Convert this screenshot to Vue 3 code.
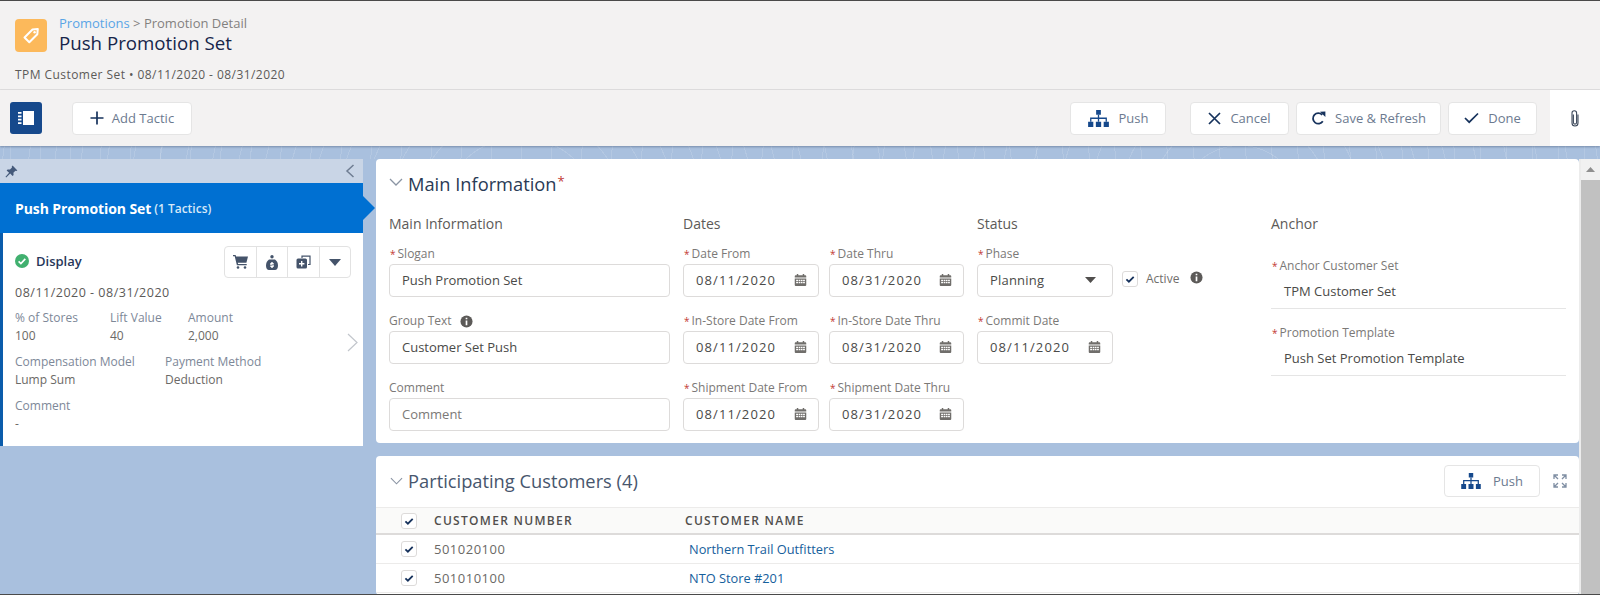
<script setup>
const mainFields = [
  { label: 'Slogan', req: true, value: 'Push Promotion Set' },
  { label: 'Group Text', info: true, value: 'Customer Set Push' },
  { label: 'Comment', value: 'Comment', placeholder: true }
]
const dateFields = [
  { label: 'Date From', value: '08/11/2020' },
  { label: 'Date Thru', value: '08/31/2020' },
  { label: 'In-Store Date From', value: '08/11/2020' },
  { label: 'In-Store Date Thru', value: '08/31/2020' },
  { label: 'Shipment Date From', value: '08/11/2020' },
  { label: 'Shipment Date Thru', value: '08/31/2020' }
]
const customers = [
  { num: '501020100', name: 'Northern Trail Outfitters' },
  { num: '501010100', name: 'NTO Store #201' }
]
const stats = [
  [{ l: '% of Stores', v: '100', w: 95 }, { l: 'Lift Value', v: '40', w: 78 }, { l: 'Amount', v: '2,000', w: 90 }],
  [{ l: 'Compensation Model', v: 'Lump Sum', w: 150 }, { l: 'Payment Method', v: 'Deduction', w: 120 }],
  [{ l: 'Comment', v: '-', w: 120 }]
]
</script>

<template>
  <div class="page">
    <svg class="defs" width="0" height="0" aria-hidden="true">
      <defs>
        <symbol id="cal" viewBox="0 0 14 14">
          <path fill="currentColor" d="M3 0.5h1.6v1.5h4.8V0.5H11v1.5h1.2c.6 0 1 .4 1 1v1.2H.8V3c0-.6.4-1 1-1H3zM.8 5.3h12.4V12.5c0 .6-.4 1-1 1H1.8c-.6 0-1-.4-1-1z"/>
          <path fill="#fff" d="M2.3 6.6h2v1.5h-2zM5 6.6h1.8v1.5H5zM7.4 6.6h1.8v1.5H7.4zM9.8 6.6h1.9v1.5H9.8zM2.3 9h2v1.6h-2zM5 9h1.8v1.6H5zM7.4 9h1.8v1.6H7.4zM9.8 9h1.9v1.6H9.8z"/>
        </symbol>
        <symbol id="info" viewBox="0 0 14 14">
          <circle cx="7" cy="7" r="6.5" fill="currentColor"/>
          <path fill="#fff" d="M6.1 3h1.8v1.7H6.1zM6.1 5.8h1.8V11H6.1z"/>
        </symbol>
        <symbol id="tree" viewBox="0 0 22 18">
          <path fill="currentColor" d="M8.5 0h5v5h-5zM0 12.5h5.5V18H0zM8.2 12.5h5.6V18H8.2zM16.5 12.5H22V18h-5.5z"/>
          <path fill="none" stroke="currentColor" stroke-width="1.4" d="M11 5v7.5M2.8 12.5V8.7h16.4v3.8"/>
        </symbol>
        <symbol id="tick" viewBox="0 0 16 16">
          <path fill="none" stroke="#16325c" stroke-width="1.8" d="M4.4 8.4l2.5 2.3 4.8-4.8"/>
        </symbol>
      </defs>
    </svg>

    <header class="head">
      <div class="tag-icon">
        <svg width="22" height="22" viewBox="0 0 22 22">
          <path fill="none" stroke="#fff" stroke-width="2" stroke-linejoin="round" d="M12.5 4.5l5.3-.6-.5 5.4-8 8-4.8-4.8z"/>
          <circle cx="14.6" cy="7.2" r="1.2" fill="#fff"/>
        </svg>
      </div>
      <div class="head-text">
        <div class="crumb"><span class="crumb-link">Promotions</span> &gt; Promotion Detail</div>
        <h1 class="title">Push Promotion Set</h1>
      </div>
      <div class="head-sub">TPM Customer Set • 08/11/2020 - 08/31/2020</div>
    </header>

    <div class="toolbar">
      <button class="toggle">
        <svg width="16" height="14" viewBox="0 0 16 14">
          <path fill="#fff" d="M5 0h11v14H5zM0 1h3.5v1.8H0zM0 4.4h3.5v1.8H0zM0 7.8h3.5v1.8H0zM0 11.2h3.5V13H0z"/>
        </svg>
      </button>
      <button class="btn add">
        <svg width="14" height="14" viewBox="0 0 14 14"><path fill="none" stroke="#16325c" stroke-width="1.7" d="M7 .5v13M.5 7h13"/></svg>
        <span>Add Tactic</span>
      </button>
      <div class="spacer"></div>
      <button class="btn push">
        <svg class="tree" width="21" height="17"><use href="#tree"/></svg>
        <span>Push</span>
      </button>
      <button class="btn cancel">
        <svg width="13" height="13" viewBox="0 0 13 13"><path fill="none" stroke="#16325c" stroke-width="1.7" d="M1 1l11 11M12 1L1 12"/></svg>
        <span>Cancel</span>
      </button>
      <button class="btn save">
        <svg width="15" height="15" viewBox="0 0 15 15"><path fill="none" stroke="#16325c" stroke-width="1.8" d="M11.8 10.2a5.3 5.3 0 1 1-.6-6.4"/><path fill="#16325c" d="M9 .8l5.4-.3v5.4z"/></svg>
        <span>Save &amp; Refresh</span>
      </button>
      <button class="btn done">
        <svg width="15" height="12" viewBox="0 0 15 12"><path fill="none" stroke="#16325c" stroke-width="1.7" d="M1 6l4.2 4.2L14 1.5"/></svg>
        <span>Done</span>
      </button>
      <div class="attach">
        <svg width="8" height="17" viewBox="0 0 8 17"><path fill="none" stroke="#3e4a5c" stroke-width="1.1" d="M2.4 4.5v8a1.6 1.6 0 0 0 3.2 0V3a2.3 2.3 0 0 0-4.6 0v10a3 3 0 0 0 6 0V4.5"/></svg>
      </div>
    </div>

    <div class="body">
      <aside class="side">
        <div class="pinbar">
          <svg width="13" height="13" viewBox="0 0 13 13"><path fill="#44597a" d="M7.6.6l4.8 4.8-1.2.6-.8-.3-2 2 .2 2.3-1 1-2.4-2.4L1.2 12.5l-.7-.7 3.6-4-2.5-2.4 1-1 2.4.2 2-2-.3-.8z"/></svg>
          <svg width="10" height="14" viewBox="0 0 10 14"><path fill="none" stroke="#6f7d92" stroke-width="1.5" d="M8.5 1L2 7l6.5 6"/></svg>
        </div>
        <div class="set-head">
          <span class="set-name">Push Promotion Set</span>
          <span class="set-count">(1 Tactics)</span>
        </div>
        <div class="card">
          <div class="card-top">
            <svg class="ok-icon" width="14" height="14" viewBox="0 0 14 14"><circle cx="7" cy="7" r="7" fill="#41b06f"/><path fill="none" stroke="#fff" stroke-width="1.7" d="M3.6 7.3l2.3 2.2 4.4-4.6"/></svg>
            <span class="tactic">Display</span>
            <div class="btn-group">
              <span class="cell">
                <svg width="15" height="14" viewBox="0 0 15 14"><path fill="#44536a" d="M0 0h2.6l.5 1.6H15l-1.6 6.2H4.8l.3 1.2h8.6v1.3H3.9L1.7 1.3H0z"/><circle cx="5" cy="12.5" r="1.3" fill="#44536a"/><circle cx="12" cy="12.5" r="1.3" fill="#44536a"/></svg>
              </span>
              <span class="cell">
                <svg width="12" height="15" viewBox="0 0 12 15"><circle cx="6" cy="1.7" r="1.7" fill="#44536a"/><path fill="#44536a" d="M3 4.4h6c2 1.4 3 3.4 3 6.3 0 2.8-1.4 4.3-3 4.3H3c-1.6 0-3-1.5-3-4.3 0-2.9 1-4.9 3-6.3z"/><path fill="#fff" d="M5.3 7h1.4v1h1v1H5.6v.6h2.1v2.5h-1v.9H5.3v-.9h-1v-1h2.3v-.6H4.3V8h1z"/></svg>
              </span>
              <span class="cell">
                <svg width="15" height="14" viewBox="0 0 15 14"><path fill="none" stroke="#44536a" stroke-width="1.2" d="M6 3V1.2h8v8.3h-2"/><rect x="0.5" y="3.5" width="10.5" height="10" rx="1.5" fill="#44536a"/><path fill="#fff" d="M5 6h1.4v2h2v1.4h-2v2H5v-2H3V8h2z"/></svg>
              </span>
              <span class="cell">
                <svg width="12" height="7" viewBox="0 0 12 7"><path fill="#44536a" d="M0 0h12L6 7z"/></svg>
              </span>
            </div>
          </div>
          <div class="card-date">08/11/2020 - 08/31/2020</div>
          <div v-for="(row, i) in stats" :key="i" class="stat-row">
            <div v-for="s in row" :key="s.l" class="stat" :style="{ width: s.w + 'px' }">
              <div class="stat-l">{{ s.l }}</div>
              <div class="stat-v">{{ s.v }}</div>
            </div>
          </div>
          <svg class="card-next" width="11" height="19" viewBox="0 0 11 19"><path fill="none" stroke="#c2c6cc" stroke-width="1.2" d="M1 1l9 8.5L1 18"/></svg>
        </div>
      </aside>

      <main class="panels">
        <section class="panel info-panel">
          <div class="sec-head">
            <svg class="chev" width="14" height="8" viewBox="0 0 14 8"><path fill="none" stroke="#8a94a3" stroke-width="1.3" d="M1 1l6 6 6-6"/></svg>
            <h2 class="sec-title">Main Information<span class="req-big">*</span></h2>
          </div>
          <div class="form">
            <div class="group g-main">
              <h3 class="g-title">Main Information</h3>
              <div class="fields">
                <div v-for="f in mainFields" :key="f.label" class="field">
                  <label class="lab">
                    <span v-if="f.req" class="req">*</span>{{ f.label }}
                    <svg v-if="f.info" class="info" width="13" height="13"><use href="#info"/></svg>
                  </label>
                  <div class="input" :class="{ ph: f.placeholder }">{{ f.value }}</div>
                </div>
              </div>
            </div>

            <div class="group g-dates">
              <h3 class="g-title">Dates</h3>
              <div class="fields dates-grid">
                <div v-for="f in dateFields" :key="f.label" class="field">
                  <label class="lab"><span class="req">*</span>{{ f.label }}</label>
                  <div class="input date">
                    <span>{{ f.value }}</span>
                    <svg class="cal" width="13" height="14"><use href="#cal"/></svg>
                  </div>
                </div>
              </div>
            </div>

            <div class="group g-status">
              <h3 class="g-title">Status</h3>
              <div class="fields">
                <div class="field">
                  <label class="lab"><span class="req">*</span>Phase</label>
                  <div class="phase-row">
                    <div class="input date phase">
                      <span>Planning</span>
                      <svg width="11" height="6" viewBox="0 0 11 6"><path fill="#514f4d" d="M0 0h11L5.5 6z"/></svg>
                    </div>
                    <span class="check"><svg width="16" height="16"><use href="#tick"/></svg></span>
                    <span class="active">Active</span>
                    <svg class="info" width="13" height="13"><use href="#info"/></svg>
                  </div>
                </div>
                <div class="field status-date">
                  <label class="lab"><span class="req">*</span>Commit Date</label>
                  <div class="input date">
                    <span>08/11/2020</span>
                    <svg class="cal" width="13" height="14"><use href="#cal"/></svg>
                  </div>
                </div>
              </div>
            </div>

            <div class="group g-anchor">
              <h3 class="g-title">Anchor</h3>
              <div class="ro-list">
                <div class="ro">
                  <label class="lab"><span class="req">*</span>Anchor Customer Set</label>
                  <div class="ro-v">TPM Customer Set</div>
                </div>
                <div class="ro">
                  <label class="lab"><span class="req">*</span>Promotion Template</label>
                  <div class="ro-v">Push Set Promotion Template</div>
                </div>
              </div>
            </div>
          </div>
        </section>

        <section class="panel cust-panel">
          <div class="cust-head">
            <svg class="chev" width="13" height="8" viewBox="0 0 14 8"><path fill="none" stroke="#8a94a3" stroke-width="1.2" d="M1 1l6 6 6-6"/></svg>
            <h2 class="sec-title cust-title">Participating Customers (4)</h2>
            <div class="spacer"></div>
            <button class="btn push2">
              <svg class="tree" width="20" height="16"><use href="#tree"/></svg>
              <span>Push</span>
            </button>
            <svg class="expand" width="14" height="14" viewBox="0 0 14 14"><path fill="none" stroke="#7f8ea3" stroke-width="1.3" d="M1 5V1h4M1 1l4 4M9 1h4v4M13 1L9 5M1 9v4h4M1 13l4-4M13 9v4H9M13 13L9 9"/></svg>
          </div>
          <div class="row thead">
            <span class="check"><svg width="16" height="16"><use href="#tick"/></svg></span>
            <span>CUSTOMER NUMBER</span>
            <span>CUSTOMER NAME</span>
          </div>
          <div v-for="c in customers" :key="c.num" class="row tr">
            <span class="check"><svg width="16" height="16"><use href="#tick"/></svg></span>
            <span class="num">{{ c.num }}</span>
            <a class="link">{{ c.name }}</a>
          </div>
        </section>
      </main>

      <div class="scroll">
        <div class="scroll-up"><svg width="9" height="5" viewBox="0 0 9 5"><path fill="#8f8f8f" d="M4.5 0L9 5H0z"/></svg></div>
        <div class="scroll-thumb"></div>
      </div>
    </div>
  </div>
</template>

<style>
html, body { margin: 0; padding: 0; background: #a9c0de; }
</style>

<style scoped>
* { box-sizing: border-box; }
.defs { position: absolute; }
.page {
  width: 1600px;
  height: 595px;
  overflow: hidden;
  display: flex;
  flex-direction: column;
  font-family: "Open Sans", "Liberation Sans", sans-serif;
  font-size: 13px;
  color: #3e3e3c;
  background: #a9c0de;
  border-top: 1px solid #4a4a4a;
  border-bottom: 1px solid #4a4a4a;
}
.head {
  height: 89px;
  flex: none;
  background: #f3f2f2;
  border-bottom: 1px solid #e2e1e0;
  display: grid;
  grid-template-columns: 32px 1fr;
  column-gap: 12px;
  grid-template-rows: 40px auto;
  padding: 13px 15px 0;
  align-items: center;
}
.tag-icon {
  width: 32px;
  height: 33px;
  margin-top: 3px;
  background: #fcb95b;
  border-radius: 4px;
  display: flex;
  align-items: center;
  justify-content: center;
}
.crumb { font-size: 13px; line-height: 18px; color: #83817f; }
.crumb-link { color: #5aa5e6; }
.title {
  margin: 0;
  font-size: 18.7px;
  line-height: 22px;
  font-weight: 500;
  color: #16254a;
}
.head-sub {
  grid-column: 1 / 3;
  font-size: 12px;
  line-height: 16px;
  letter-spacing: .44px;
  color: #5c5a58;
  margin-top: 6px;
}
.toolbar {
  height: 56px;
  flex: none;
  background: #f3f2f2;
  display: flex;
  align-items: center;
  padding-left: 10px;
  box-shadow: 0 1px 2px rgba(60, 80, 110, .45);
  position: relative;
}
.toggle {
  width: 32px;
  height: 32px;
  border: none;
  padding: 0;
  background: #16498c;
  border-radius: 3px;
  display: flex;
  align-items: center;
  justify-content: center;
  margin-right: 30px;
}
.spacer { flex: 1; }
.btn {
  height: 33px;
  background: #fff;
  border: 1px solid #e5e5e5;
  border-radius: 4px;
  display: flex;
  align-items: center;
  justify-content: center;
  gap: 9px;
  font: inherit;
  font-size: 13px;
  color: #6c7a8f;
  padding: 0;
}
.add { width: 120px; gap: 8px; }
.push { width: 96px; margin-right: 24px; gap: 10px; }
.cancel { width: 99px; margin-right: 7px; }
.save { width: 145px; margin-right: 7px; }
.done { width: 89px; margin-right: 13px; }
.tree { color: #16498c; }
.attach {
  width: 50px;
  height: 56px;
  background: #fff;
  display: flex;
  align-items: center;
  justify-content: center;
}
.body {
  flex: 1;
  min-height: 0;
  display: flex;
  padding-top: 13px;
  align-items: flex-start;
  background-image: repeating-radial-gradient(circle at 520px 70px, rgba(255, 255, 255, .13) 0 1px, transparent 1px 26px),
    repeating-radial-gradient(circle at 1240px 60px, rgba(255, 255, 255, .13) 0 1px, transparent 1px 30px);
  background-size: 100% 13px;
  background-repeat: no-repeat;
}
.side { width: 363px; flex: none; }
.pinbar {
  height: 24px;
  background: #c9d5e6;
  display: flex;
  align-items: center;
  justify-content: space-between;
  padding: 0 8px 0 5px;
}
.set-head {
  height: 50px;
  background: #0070d2;
  color: #fff;
  display: flex;
  align-items: center;
  gap: 3px;
  padding-left: 15px;
  position: relative;
}
.set-head::after {
  content: "";
  position: absolute;
  left: 100%;
  top: 13px;
  border-left: 12px solid #0070d2;
  border-top: 12px solid transparent;
  border-bottom: 12px solid transparent;
}
.set-name { font-size: 14px; font-weight: 700; letter-spacing: -.1px; }
.set-count { font-size: 12px; font-weight: 600; color: #d7e8f8; }
.card {
  height: 213px;
  background: #fff;
  border-left: 3px solid #0b5cab;
  padding: 13px 12px 0 12px;
  position: relative;
}
.card-top { display: flex; align-items: center; height: 32px; }
.ok-icon { margin-top: -2px; }
.tactic { margin: -2px 0 0 7px; font-weight: 600; color: #27375a; }
.btn-group {
  margin-left: auto;
  display: flex;
  border: 1px solid #e2e2e2;
  border-radius: 4px;
  height: 32px;
  width: 127px;
}
.cell {
  flex: 1;
  display: flex;
  align-items: center;
  justify-content: center;
  border-left: 1px solid #e2e2e2;
}
.cell:first-child { border-left: none; }
.card-date { margin-top: 7px; font-size: 12.5px; line-height: 16px; letter-spacing: .5px; color: #5c5a58; }
.stat-row { display: flex; margin-top: 8px; }
.stat-l { font-size: 12px; line-height: 18px; color: #7d8898; }
.stat-v { font-size: 12px; line-height: 18px; color: #6b6966; }
.card-next { position: absolute; right: 5px; top: 100px; }
.panels {
  width: 1203px;
  margin-left: 13px;
  flex: none;
  display: flex;
  flex-direction: column;
  gap: 13px;
}
.panel { background: #fff; border-radius: 4px; }
.info-panel { height: 284px; padding-left: 13px; }
.sec-head { height: 46px; display: flex; align-items: center; }
.chev { flex: none; margin-right: 5px; }
.sec-title {
  margin: 0;
  font-size: 18.3px;
  line-height: 26px;
  font-weight: 400;
  color: #2a3a55;
}
.req-big { color: #c23934; font-size: 13px; vertical-align: 5px; margin-left: 1px; }
.form { display: flex; padding-top: 10px; }
.group { flex: none; }
.g-main { width: 281px; margin-right: 13px; }
.g-dates { width: 281px; margin-right: 13px; }
.g-status { width: 294px; }
.g-anchor { width: 295px; }
.g-title {
  margin: 0 0 14px;
  font-size: 14px;
  line-height: 18px;
  font-weight: 400;
  color: #5c5a58;
}
.fields { display: flex; flex-direction: column; gap: 17px; }
.dates-grid { display: grid; grid-template-columns: 136px 135px; column-gap: 10px; row-gap: 17px; }
.lab {
  display: flex;
  align-items: center;
  height: 14px;
  margin-bottom: 3px;
  font-size: 12px;
  line-height: 14px;
  color: #7b7977;
  white-space: nowrap;
}
.req { color: #c23934; font-size: 10px; margin: 0 2px 0 1px; }
.info { color: #5c5a58; margin-left: 8px; flex: none; }
.input {
  height: 33px;
  border: 1px solid #dddbda;
  border-radius: 4px;
  padding: 0 12px 2px;
  display: flex;
  align-items: center;
  font-size: 13px;
  color: #4a4a48;
}
.input.ph { color: #7b7977; }
.date { justify-content: space-between; padding-right: 11px; }
.date span { letter-spacing: 1.1px; }
.phase span { letter-spacing: .2px; }
.cal { color: #706e6b; flex: none; }
.phase-row { display: flex; align-items: center; }
.phase { width: 136px; flex: none; padding-right: 16px; }
.phase-row .check { margin: -4px 0 0 9px; }
.status-date { width: 136px; }
.check {
  width: 16px;
  height: 16px;
  border: 1px solid #dddbda;
  border-radius: 3px;
  display: block;
  flex: none;
  position: relative;
  background: #fff;
}
.check svg { position: absolute; left: -1px; top: -1px; }
.active { margin: -4px 0 0 8px; font-size: 12px; color: #706e6b; }
.phase-row .info { margin: -6px 0 0 11px; }
.ro-list { padding-top: 12px; }
.ro { height: 67px; width: 295px; }
.ro .lab { margin-bottom: 9px; }
.ro-v {
  height: 27px;
  padding: 0 13px;
  border-bottom: 1px solid #e5e5e5;
  line-height: 18px;
  font-size: 13px;
  color: #4a4a48;
}
.cust-panel { height: 139px; }
.cust-head {
  height: 51px;
  display: flex;
  align-items: center;
  padding: 0 0 2px 14px;
}
.cust-title { color: #47566d; }
.push2 { width: 96px; height: 32px; gap: 12px; margin-right: 13px; }
.expand { margin-right: 12px; flex: none; }
.row {
  display: grid;
  grid-template-columns: 33px 251px 1fr;
  align-items: center;
  padding-left: 25px;
}
.thead {
  height: 28px;
  background: #fafaf9;
  border-top: 1px solid #ecebea;
  border-bottom: 2px solid #dddbda;
  font-size: 12px;
  font-weight: 600;
  letter-spacing: 1.3px;
  color: #514f4d;
}
.tr { height: 29px; border-bottom: 1px solid #ecebea; }
.num { font-size: 13px; color: #6b6966; letter-spacing: .5px; }
.link { font-size: 12.8px; color: #16609c; padding-left: 4px; }
.scroll {
  width: 21px;
  height: 100%;
  border-left: 2px solid #ececec;
  display: flex;
  flex-direction: column;
  flex: none;
}
.scroll-up {
  height: 21px;
  background: #f1f1f1;
  display: flex;
  align-items: center;
  justify-content: center;
}
.scroll-thumb { flex: 1; background: #c1c1c1; }
</style>
